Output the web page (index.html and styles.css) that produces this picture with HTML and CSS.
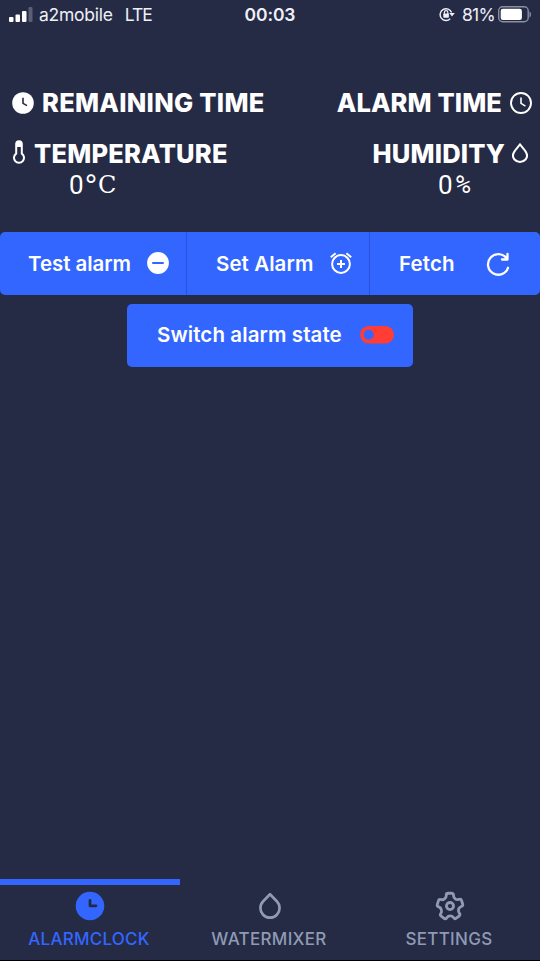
FILE: index.html
```html
<!DOCTYPE html>
<html lang="en">
<head>
<meta charset="utf-8">
<title>Alarm clock</title>
<link rel="stylesheet" href="styles.css">
</head>
<body>
<div class="app">
  <header class="status">
    <div class="status-left">
      <svg class="signal" width="24" height="16" viewBox="0 0 24 16"><rect x="0" y="10" width="4.5" height="5" rx="1"/><rect x="6.5" y="7.5" width="4.5" height="7.5" rx="1"/><rect x="13" y="4" width="4.5" height="11" rx="1"/><rect class="dim" x="19.5" y="0" width="4" height="15" rx="1"/></svg>
      <span class="carrier">a2mobile</span><span class="net">LTE</span>
    </div>
    <span class="time">00:03</span>
    <div class="status-right">
      <svg width="16" height="15" viewBox="0 0 16 15"><path class="line" d="M11.2 11.8A5.9 5.9 0 1 1 12.6 5.6" stroke-width="1.4"/><path d="M10.2 6h5.6L13 9.4z"/><path class="line" d="M5.4 7V5.3a1.7 1.7 0 0 1 3.4 0V7" stroke-width="1.2"/><rect x="4.3" y="6.5" width="5.6" height="4.2" rx=".7"/></svg>
      <span class="charge">81%</span>
      <svg width="33" height="17" viewBox="0 0 33 17"><rect class="battery" x=".7" y=".8" width="29.5" height="15" rx="4"/><rect class="level" x="2.7" y="2.7" width="21.2" height="11.2" rx="2.2"/><path class="nub" d="M31.5 5.5c2 1 2 5 0 6z"/></svg>
    </div>
  </header>

  <main>
    <section class="readings">
      <div class="reading">
        <h2 class="row-one"><svg class="clock" width="22" height="22" viewBox="0 0 22 22"><circle cx="11" cy="11" r="10.8"/><path class="cut" d="M11 5.8v5.6l4 2.2"/></svg><span class="t-remaining">REMAINING TIME</span></h2>
      </div>
      <div class="reading right">
        <h2 class="row-one"><span class="t-alarm">ALARM TIME</span><svg width="22" height="22" viewBox="0 0 22 22"><circle class="line" cx="11" cy="11" r="10" stroke-width="1.9"/><path class="line" d="M11 5.4v6l4.4 2.7" stroke-width="1.6"/></svg></h2>
      </div>
      <div class="reading">
        <h2><svg class="thermo" width="12" height="24" viewBox="0 0 12 24"><path class="line" d="M3.2 4a2.8 2.8 0 0 1 5.6 0v9.6a5 5 0 1 1-5.6 0z" stroke-width="2"/><path d="M3 7V4a3 3 0 0 1 6 0v3z"/></svg><span class="t-temp">TEMPERATURE</span></h2>
        <p class="value temp"><span class="zero">0</span><span class="degree">°</span><span class="unit">C</span></p>
      </div>
      <div class="reading right">
        <h2><span class="t-hum">HUMIDITY</span><svg class="drop" width="16" height="20" viewBox="0 0 16 20"><path class="line" d="M8 1.4 3.2 7.3C.2 11 .5 14.2 2.5 16.5a7.4 7.4 0 0 0 11 0c2-2.3 2.3-5.5-.7-9.2z" stroke-width="2"/></svg></h2>
        <p class="value hum"><span class="zero">0</span><span class="percent">%</span></p>
      </div>
    </section>

    <div class="buttons">
      <button class="test"><span class="b-test">Test alarm</span><svg width="22" height="22" viewBox="0 0 22 22"><circle cx="11" cy="11" r="10.9"/><path d="M6 11h10" stroke="#36f" stroke-width="2" stroke-linecap="round"/></svg></button>
      <button class="set"><span class="b-set">Set Alarm</span><svg width="22" height="22" viewBox="0 0 22 22"><circle class="line" cx="11" cy="12" r="8.9" stroke-width="2"/><path class="line" d="M11 8v8M7 12h8M.8 5.3 5.6 1.2M21.2 5.3l-4.8-4.1" stroke-width="2"/></svg></button>
      <button class="fetch"><span class="b-fetch">Fetch</span><svg width="24" height="24" viewBox="0 0 24 24"><path class="line round" d="M22 15.8A10.3 10.3 0 1 1 20.6 6.3M21.5 2v5.5H16" stroke-width="2.3"/></svg></button>
    </div>
    <button class="switch"><span class="b-switch">Switch alarm state</span><svg width="34" height="18" viewBox="0 0 34 18"><rect width="34" height="17.5" rx="8.75"/><circle cx="8.7" cy="8.7" r="5"/></svg></button>
  </main>

  <nav>
    <a class="tab active"><svg width="30" height="30" viewBox="0 0 30 30"><circle cx="15" cy="15" r="14.3"/><path d="M15 9.3v5.5h6" stroke="#222b45" stroke-width="2.7" stroke-linecap="round" stroke-linejoin="round" fill="none"/></svg><span class="n-alarm">ALARMCLOCK</span></a>
    <a class="tab"><svg width="30" height="30" viewBox="0 0 30 30"><path d="M15 3.3 8.2 10.2a9.7 9.7 0 0 0-.1 13.5 9.6 9.6 0 0 0 13.8 0 9.7 9.7 0 0 0-.1-13.5z" fill="none" stroke="currentColor" stroke-width="2.7" stroke-linejoin="round"/></svg><span class="n-water">WATERMIXER</span></a>
    <a class="tab"><svg width="34" height="34" viewBox="0 0 24 24"><path d="M8.61 22a2.25 2.25 0 0 1-1.35-.46L5.19 20a2.37 2.37 0 0 1-.49-3.22 2.06 2.06 0 0 0 .23-1.86l-.06-.16a1.83 1.83 0 0 0-1.12-1.22h-.16a2.34 2.34 0 0 1-1.48-2.94L2.93 8a2.18 2.18 0 0 1 1.12-1.41 2.14 2.14 0 0 1 1.68-.12 1.93 1.93 0 0 0 1.78-.29l.13-.1a1.94 1.94 0 0 0 .73-1.51v-.24A2.32 2.32 0 0 1 10.66 2h2.55a2.26 2.26 0 0 1 1.6.67 2.37 2.37 0 0 1 .68 1.68v.28a1.76 1.76 0 0 0 .69 1.43l.11.08a1.74 1.74 0 0 0 1.59.26l.34-.11A2.26 2.26 0 0 1 21.1 7.8l.79 2.52a2.36 2.36 0 0 1-1.46 2.93l-.2.07A1.89 1.89 0 0 0 19 14.6a2 2 0 0 0 .25 1.65l.26.38a2.38 2.38 0 0 1-.5 3.23L17 21.41a2.24 2.24 0 0 1-3.22-.53l-.12-.17a1.75 1.75 0 0 0-1.5-.78 1.8 1.8 0 0 0-1.43.77l-.23.33A2.25 2.25 0 0 1 9 22a2 2 0 0 1-.39 0zM4.4 11.62a3.83 3.83 0 0 1 2.38 2.5v.12a4 4 0 0 1-.46 3.62.38.38 0 0 0 0 .51L8.47 20a.25.25 0 0 0 .37-.07l.23-.33a3.77 3.77 0 0 1 6.2 0l.12.18a.3.3 0 0 0 .18.12.25.25 0 0 0 .19-.05l2.06-1.56a.36.36 0 0 0 .07-.49l-.26-.38A4 4 0 0 1 17.1 14a3.92 3.92 0 0 1 2.49-2.61l.2-.07a.34.34 0 0 0 .19-.44l-.78-2.49a.35.35 0 0 0-.2-.19.21.21 0 0 0-.19 0l-.34.11a3.74 3.74 0 0 1-3.43-.57L15 7.65a3.76 3.76 0 0 1-1.49-3v-.31a.37.37 0 0 0-.1-.26.31.31 0 0 0-.21-.08h-2.54a.31.31 0 0 0-.29.33v.25a3.9 3.9 0 0 1-1.52 3.09l-.13.1a3.91 3.91 0 0 1-3.63.59.22.22 0 0 0-.14 0 .28.28 0 0 0-.12.15L4 11.12a.36.36 0 0 0 .22.45z"/><path d="M12 15.5a3.5 3.5 0 1 1 3.5-3.5 3.5 3.5 0 0 1-3.5 3.5zm0-5a1.5 1.5 0 1 0 1.5 1.5 1.5 1.5 0 0 0-1.5-1.5z"/></svg><span class="n-settings">SETTINGS</span></a>
  </nav>
</div>
</body>
</html>
```
FILE: styles.css
```css
* { box-sizing: border-box; }
body { margin: 0; background: #252a45; color: #fff; font-family: Inter, "Liberation Sans", sans-serif; }
.app { height: 961px; display: flex; flex-direction: column; border-bottom: 1px solid #000; }
svg { display: block; flex: none; fill: currentColor; }
.line { fill: none; stroke: currentColor; }
.round { stroke-linecap: round; stroke-linejoin: round; }
span { white-space: nowrap; }

.status { height: 31px; display: grid; grid-template-columns: 1fr auto 1fr; align-items: center; padding: 0 9px 2px 9px; font-size: 17.5px; color: #eef0f8; }
.status-left, .status-right { display: flex; align-items: center; }
.status-right { justify-content: flex-end; }
.signal { margin-right: 6px; color: #fff; }
.dim { opacity: .25; }
.carrier { letter-spacing: -.25px; }
.net { margin-left: 12px; letter-spacing: -1px; }
.time { font-weight: 600; letter-spacing: -.1px; }
.charge { margin: 0 3px 0 7px; letter-spacing: -.7px; }
.battery { fill: none; stroke: #8b8fa3; stroke-width: 1.4; }
.level { fill: #fff; }
.nub { fill: #8b8fa3; }

main { flex: 1; }
.readings { display: grid; grid-template-columns: 1fr 1fr; grid-template-rows: 51px 93px; padding: 57px 8px 0 12px; }
h2 { margin: 0; height: 30px; display: flex; align-items: center; font-size: 25.5px; line-height: 30px; font-weight: 800; }
.row-one { gap: 8px; }
.row-one svg { margin-top: -1px; }
.t-remaining { letter-spacing: .28px; }
.t-alarm { letter-spacing: .1px; }
.t-temp { letter-spacing: .2px; }
.t-hum { letter-spacing: .15px; }
.right h2 { justify-content: flex-end; }
.thermo { margin: -4px 9px 0 1px; }
.drop { margin: -3px 4px 0 7px; }
.cut { fill: none; stroke: #252a45; stroke-width: 1.6; }
.value { margin: 0; height: 30px; display: flex; align-items: center; font: 26px/30px Roboto, sans-serif; }
.temp { padding-left: 57px; }
.hum { padding-left: 166px; }
.zero { width: 17px; transform: translateY(1px); }
.degree { width: 13px; font: 28px/30px "DejaVu Sans", sans-serif; transform: translate(-2px, 2px); }
.unit { font-family: "DejaVu Serif", serif; font-size: 24px; transform: translate(-1px, 1px); }
.percent { margin-left: 1px; font: 24px/30px "DejaVu Sans Mono", monospace; transform: translateY(1px); }

button { border: 0; color: #fff; background: #36f; font: 600 20.5px/24px Inter, sans-serif; display: flex; align-items: center; height: 63px; padding: 0; }
.buttons { display: grid; grid-template-columns: 187px 183px 170px; border-radius: 5px; overflow: hidden; }
.test { padding: 0 17px 2px 28px; justify-content: space-between; border-right: 1px solid #2852d9; }
.set { padding: 0 17px 2px 29px; justify-content: space-between; border-right: 1px solid #2852d9; }
.test span, .set span { transform: translateY(1px); }
.b-test { letter-spacing: -.05px; }
.b-set { letter-spacing: .08px; }
.fetch { padding: 0 30px 0 29px; justify-content: space-between; }
.b-fetch { letter-spacing: .15px; }
.switch { width: 286px; margin: 9px auto 0; padding: 0 19px 1px 30px; justify-content: space-between; border-radius: 5px; }
.b-switch { letter-spacing: .1px; }
.switch svg { fill: #ff3d35; }
.switch circle { fill: #36f; }

nav { height: 81px; display: grid; grid-template-columns: repeat(3, 1fr); }
.tab { display: flex; flex-direction: column; align-items: center; border-top: 6px solid transparent; color: #8f9bb3; font-size: 17px; line-height: 20px; font-weight: 500; }
.tab svg { height: 30px; margin: 6px 0 8px; overflow: visible; }
.tab:last-child svg { height: 34px; margin: 4px 0 6px; }
.n-alarm { letter-spacing: .25px; margin-right: 2px; }
.n-water { letter-spacing: .3px; margin-right: 2px; }
.n-settings { letter-spacing: .3px; margin-right: 2px; }
.active { color: #36f; border-color: #36f; }
```
